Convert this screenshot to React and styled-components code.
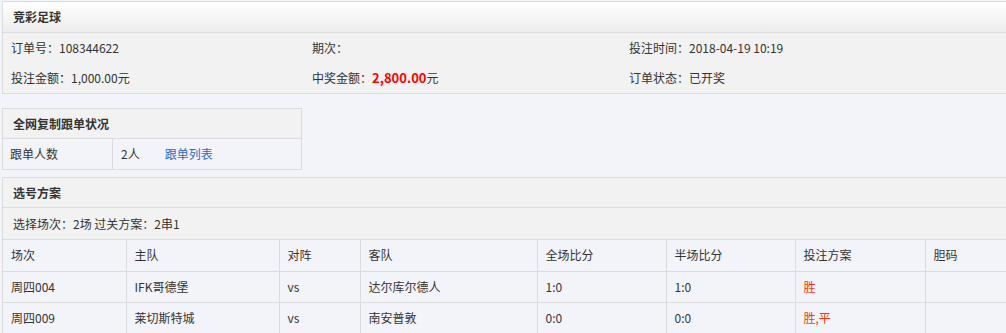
import React from 'react';
import styled, { createGlobalStyle } from 'styled-components';

const GlobalStyle = createGlobalStyle`
  html, body {
    margin: 0;
    padding: 0;
    background: #f3f4f9;
    overflow: hidden;
  }
  body {
    font-family: "Noto Sans CJK SC", "Microsoft YaHei", sans-serif;
    font-size: 12px;
    line-height: 18px;
    color: #333;
  }
`;

const Page = styled.div`
  padding: 1px 0 0 2px;
  width: 1012px;
`;

const Panel = styled.div`
  border: 1px solid #dcdcdc;
  width: ${(p) => p.$width || '1010px'};
  margin-bottom: ${(p) => p.$gap || '0'};
  box-sizing: border-box;
`;

const PanelHead = styled.div`
  height: ${(p) => p.$h || '29px'};
  line-height: ${(p) => p.$h || '29px'};
  padding-left: 10px;
  font-weight: bold;
  font-size: 12px;
  color: #333;
  border-bottom: 1px solid #dcdcdc;
  background: ${(p) => (p.$gradient ? 'linear-gradient(#ffffff, #ececec)' : '#f2f2f2')};
`;

const InfoBody = styled.div`
  background: #f2f2f2;
  padding: 0 0 0 8px;
`;

const InfoRow = styled.div`
  display: grid;
  grid-template-columns: 301px 317px 1fr;
  height: 30px;
  align-items: center;
`;

const Money = styled.span`
  color: #ff0000;
  font-weight: bold;
  font-size: 13px;
`;

const FollowRow = styled.div`
  display: grid;
  grid-template-columns: 110px 1fr;
  height: 30px;
  align-items: center;
`;

const FollowLabel = styled.div`
  height: 100%;
  line-height: 30px;
  padding-left: 7px;
  border-right: 1px solid #dcdcdc;
`;

const FollowValue = styled.div`
  padding-left: 8px;
  display: flex;
  gap: 25px;
`;

const Link = styled.a`
  color: #2f68c4;
  text-decoration: none;
`;

const SubRow = styled.div`
  height: 31px;
  line-height: 31px;
  padding-left: 10px;
  background: #f2f2f2;
  border-bottom: 1px solid #dcdcdc;
`;

const Table = styled.table`
  border-collapse: collapse;
  width: 100%;
  table-layout: fixed;
`;

const Cell = styled.td`
  height: 31px;
  box-sizing: border-box;
  padding: 0 0 0 8px;
  border-right: 1px solid #dcdcdc;
  border-bottom: 1px solid #dcdcdc;
  white-space: nowrap;
  color: ${(p) => (p.$red ? '#ff3300' : '#333')};
`;

const columns = [
  ['场次', '123px'],
  ['主队', '153px'],
  ['对阵', '81px'],
  ['客队', '177px'],
  ['全场比分', '129px'],
  ['半场比分', '129px'],
  ['投注方案', '130px'],
  ['胆码', 'auto'],
];

const matches = [
  { no: '周四004', home: 'IFK哥德堡', away: '达尔库尔德人', full: '1:0', half: '1:0', pick: '胜' },
  { no: '周四009', home: '莱切斯特城', away: '南安普敦', full: '0:0', half: '0:0', pick: '胜,平' },
];

export default function App() {
  return (
    <>
      <GlobalStyle />
      <Page>
        <Panel $gap="14px">
          <PanelHead $gradient $h="30px">竞彩足球</PanelHead>
          <InfoBody>
            <InfoRow>
              <span>订单号：108344622</span>
              <span>期次：</span>
              <span>投注时间：2018-04-19 10:19</span>
            </InfoRow>
            <InfoRow>
              <span>投注金额：1,000.00元</span>
              <span>中奖金额：<Money>2,800.00</Money>元</span>
              <span>订单状态：已开奖</span>
            </InfoRow>
          </InfoBody>
        </Panel>

        <Panel $width="300px" $gap="7px">
          <PanelHead>全网复制跟单状况</PanelHead>
          <FollowRow>
            <FollowLabel>跟单人数</FollowLabel>
            <FollowValue>
              <span>2人</span>
              <Link href="#">跟单列表</Link>
            </FollowValue>
          </FollowRow>
        </Panel>

        <Panel>
          <PanelHead>选号方案</PanelHead>
          <SubRow>选择场次：2场 过关方案：2串1</SubRow>
          <Table>
            <colgroup>
              {columns.map(([name, w]) => (
                <col key={name} style={w === 'auto' ? undefined : { width: w }} />
              ))}
            </colgroup>
            <tbody>
              <tr>
                {columns.map(([name]) => (
                  <Cell key={name}>{name}</Cell>
                ))}
              </tr>
              {matches.map((m) => (
                <tr key={m.no}>
                  <Cell>{m.no}</Cell>
                  <Cell>{m.home}</Cell>
                  <Cell>vs</Cell>
                  <Cell>{m.away}</Cell>
                  <Cell>{m.full}</Cell>
                  <Cell>{m.half}</Cell>
                  <Cell $red>{m.pick}</Cell>
                  <Cell></Cell>
                </tr>
              ))}
            </tbody>
          </Table>
        </Panel>
      </Page>
    </>
  );
}
